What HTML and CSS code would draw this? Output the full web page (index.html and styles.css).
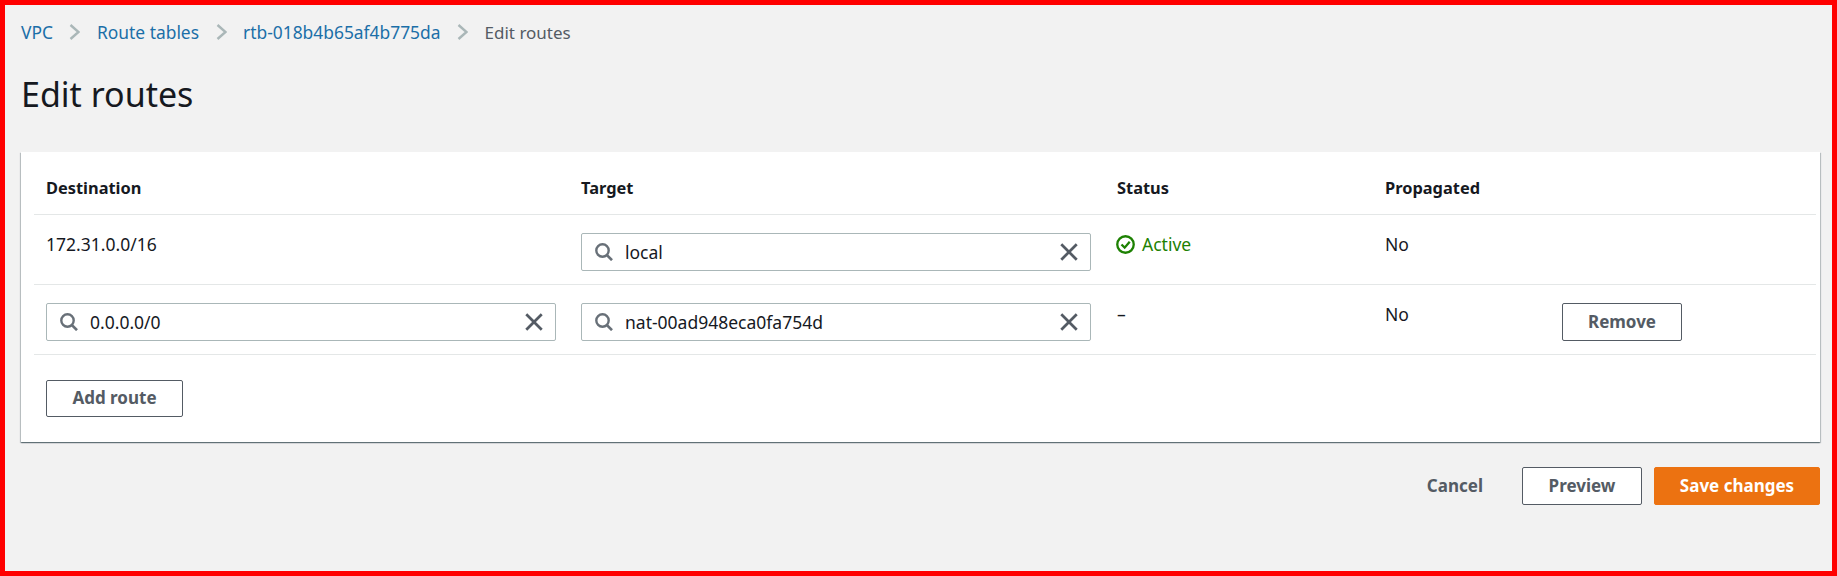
FILE: index.html
```html
<!DOCTYPE html>
<html lang="en">
<head>
<meta charset="utf-8">
<title>Edit routes</title>
<link rel="stylesheet" href="styles.css">
</head>
<body>
<svg class="sprites" width="0" height="0" aria-hidden="true">
  <symbol id="chev" viewBox="0 0 11 16"><path d="M1.5 1 L9.5 8 L1.5 15" fill="none" stroke="currentColor" stroke-width="2.4"/></symbol>
  <symbol id="search" viewBox="0 0 18 18"><circle cx="7.5" cy="7.5" r="6.2" fill="none" stroke="currentColor" stroke-width="2.4"/><path d="M11.8 12 L17 17.2" fill="none" stroke="currentColor" stroke-width="2.6"/></symbol>
  <symbol id="close" viewBox="0 0 17 17"><path d="M1.2 1.2 L15.8 15.8 M15.8 1.2 L1.2 15.8" fill="none" stroke="currentColor" stroke-width="2.6"/></symbol>
  <symbol id="check" viewBox="0 0 18 18"><circle cx="9" cy="9" r="7.8" fill="none" stroke="currentColor" stroke-width="2.2"/><path d="M5.2 9 L8.2 12 L13 6.4" fill="none" stroke="currentColor" stroke-width="2.2"/></symbol>
</svg>
<div class="page">
  <nav class="crumbs">
    <a class="crumb" href="#">VPC</a>
    <svg class="chev"><use href="#chev"/></svg>
    <a class="crumb" href="#">Route tables</a>
    <svg class="chev"><use href="#chev"/></svg>
    <a class="crumb" href="#">rtb-018b4b65af4b775da</a>
    <svg class="chev"><use href="#chev"/></svg>
    <span class="crumb-current">Edit routes</span>
  </nav>
  <h1 class="title">Edit routes</h1>
  <section class="card">
    <div class="row head">
      <div>Destination</div>
      <div>Target</div>
      <div>Status</div>
      <div>Propagated</div>
      <div></div>
    </div>
    <div class="row">
      <div class="cell-text">172.31.0.0/16</div>
      <div class="field">
        <svg class="ico-search"><use href="#search"/></svg>
        <span class="field-value">local</span>
        <svg class="ico-close"><use href="#close"/></svg>
      </div>
      <div class="cell-text status-ok"><svg class="ico-check"><use href="#check"/></svg>Active</div>
      <div class="cell-text">No</div>
      <div></div>
    </div>
    <div class="row">
      <div class="field">
        <svg class="ico-search"><use href="#search"/></svg>
        <span class="field-value">0.0.0.0/0</span>
        <svg class="ico-close"><use href="#close"/></svg>
      </div>
      <div class="field">
        <svg class="ico-search"><use href="#search"/></svg>
        <span class="field-value">nat-00ad948eca0fa754d</span>
        <svg class="ico-close"><use href="#close"/></svg>
      </div>
      <div class="cell-text">–</div>
      <div class="cell-text">No</div>
      <div><button class="btn btn-remove">Remove</button></div>
    </div>
    <div class="card-foot">
      <button class="btn btn-add">Add route</button>
    </div>
  </section>
  <footer class="actions">
    <button class="btn-link">Cancel</button>
    <button class="btn btn-preview">Preview</button>
    <button class="btn btn-primary">Save changes</button>
  </footer>
</div>
</body>
</html>
```
FILE: styles.css
```css
* { box-sizing: border-box; }
html, body { margin: 0; padding: 0; }
body {
  width: 1837px;
  height: 576px;
  overflow: hidden;
  background: #f2f2f2;
  border: 5px solid #f00;
  font-family: "Noto Sans", "Liberation Sans", sans-serif;
  font-size: 17.5px;
  color: #16191f;
}
.sprites { position: absolute; }
.page { padding: 0 12px 0 16px; }
.crumbs {
  display: flex;
  align-items: center;
  height: 54px;
  font-size: 17.4px;
}
.crumb { color: #1b6fa8; text-decoration: none; }
.crumb-current { color: #545b64; font-size: 17px; }
.chev { width: 11px; height: 16px; margin: 0 16.5px; color: #aab7b8; }
.title {
  margin: 0;
  height: 93px;
  padding-top: 13px;
  font-size: 34px;
  font-weight: 400;
  line-height: 44px;
  color: #16191f;
}
.card {
  height: 290px;
  padding: 0 4px 0 13px;
  background: #fff;
  box-shadow: 0 1px 1px 0 rgba(0,28,36,.4), 1px 1px 1px 0 rgba(0,28,36,.18), -1px 1px 1px 0 rgba(0,28,36,.18);
}
.row {
  display: grid;
  grid-template-columns: 535px 536px 268px 177px 266px;
  height: 70px;
  padding: 18px 0 0 12px;
  border-bottom: 1px solid #e4e7e7;
}
.row.head {
  height: 63px;
  padding-top: 24px;
  font-size: 16.4px;
  font-weight: 700;
  line-height: 24px;
}
.row > .field { margin-right: 26px; }
.row > .field:first-child { margin-right: 25px; }
.cell-text { line-height: 23px; }
.field {
  display: flex;
  align-items: center;
  height: 38px;
  padding: 0 12px 0 13px;
  background: #fff;
  border: 1px solid #aab7b8;
  border-radius: 2px;
}
.field-value { flex: 1; margin-left: 12px; line-height: 24px; }
.ico-search { width: 18px; height: 18px; color: #687078; }
.ico-close { width: 18px; height: 18px; color: #545b64; }
.status-ok { display: flex; align-items: center; height: 23px; color: #1d8102; }
.ico-check { width: 19px; height: 19px; margin-right: 7px; margin-left: -1px; }
.btn {
  height: 38px;
  padding: 0 0 2px;
  background: #fff;
  border: 1px solid #545b64;
  border-radius: 2px;
  color: #545b64;
  font: 700 17px "Noto Sans", "Liberation Sans", sans-serif;
}
.btn-remove { width: 120px; }
.card-foot { padding: 25px 0 0 12px; }
.btn-add { width: 137px; height: 37px; }
.actions {
  display: flex;
  align-items: center;
  justify-content: flex-end;
  margin-top: 25px;
}
.btn-link {
  margin-right: 39px;
  padding: 0 0 2px;
  background: none;
  border: 0;
  color: #545b64;
  font: 700 17px "Noto Sans", "Liberation Sans", sans-serif;
}
.btn-preview { width: 120px; margin-right: 12px; }
.btn-primary { width: 166px; background: #ec7211; border-color: #ec7211; color: #fff; }
```
